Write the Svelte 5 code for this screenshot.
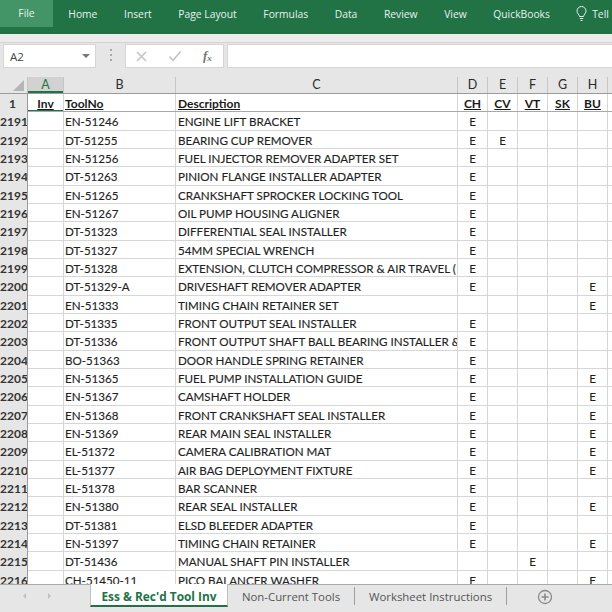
<script>
  const columns = ["A", "B", "C", "D", "E", "F", "G", "H", "I"]
  const menu = ["Home", "Insert", "Page Layout", "Formulas", "Data", "Review", "View", "QuickBooks"]

  // row, tool, description, then the E marks by column
  const rows = [
    [2191, "EN-51246", "ENGINE LIFT BRACKET", "D"],
    [2192, "DT-51255", "BEARING CUP REMOVER", "DE"],
    [2193, "EN-51256", "FUEL INJECTOR REMOVER ADAPTER SET", "D"],
    [2194, "DT-51263", "PINION FLANGE INSTALLER ADAPTER", "D"],
    [2195, "EN-51265", "CRANKSHAFT SPROCKER LOCKING TOOL", "D"],
    [2196, "EN-51267", "OIL PUMP HOUSING ALIGNER", "D"],
    [2197, "DT-51323", "DIFFERENTIAL SEAL INSTALLER", "D"],
    [2198, "DT-51327", "54MM SPECIAL WRENCH", "D"],
    [2199, "DT-51328", "EXTENSION, CLUTCH COMPRESSOR & AIR TRAVEL (", "D"],
    [2200, "DT-51329-A", "DRIVESHAFT REMOVER ADAPTER", "DH"],
    [2201, "EN-51333", "TIMING CHAIN RETAINER SET", "H"],
    [2202, "DT-51335", "FRONT OUTPUT SEAL INSTALLER", "D"],
    [2203, "DT-51336", "FRONT OUTPUT SHAFT BALL BEARING INSTALLER &", "D"],
    [2204, "BO-51363", "DOOR HANDLE SPRING RETAINER", "D"],
    [2205, "EN-51365", "FUEL PUMP INSTALLATION GUIDE", "DH"],
    [2206, "EN-51367", "CAMSHAFT HOLDER", "DH"],
    [2207, "EN-51368", "FRONT CRANKSHAFT SEAL INSTALLER", "DH"],
    [2208, "EN-51369", "REAR MAIN SEAL INSTALLER", "DH"],
    [2209, "EL-51372", "CAMERA CALIBRATION MAT", "DH"],
    [2210, "EL-51377", "AIR BAG DEPLOYMENT FIXTURE", "DH"],
    [2211, "EL-51378", "BAR SCANNER", "D"],
    [2212, "EN-51380", "REAR SEAL INSTALLER", "DH"],
    [2213, "DT-51381", "ELSD BLEEDER ADAPTER", "D"],
    [2214, "EN-51397", "TIMING CHAIN RETAINER", "DH"],
    [2215, "DT-51436", "MANUAL SHAFT PIN INSTALLER", "F"],
    [2216, "CH-51450-11", "PICO BALANCER WASHER", "DH"]
  ]
</script>

<div class="excel">
  <nav class="ribbon">
    <span class="file">File</span>
    {#each menu as item}
      <span class="menuItem">{item}</span>
    {/each}
    <span class="tell">
      <svg width="11" height="16" viewBox="0 0 11 16" fill="none" stroke="#e4efe8" stroke-width="1">
        <path d="M3.500 10.500C3.300 8.500 1 7.600 1 5a4.500 4.500 0 0 1 9 0c0 2.600-2.300 3.500-2.500 5.500z" />
        <path d="M3.800 12.500h3.400M4.500 14.500h2" />
      </svg>
      Tell
    </span>
  </nav>

  <div class="band"></div>

  <div class="formulaBar">
    <div class="nameBox">
      <span>A2</span>
      <i class="caret"></i>
    </div>
    <div class="grip"><b></b><b></b><b></b></div>
    <div class="fxButtons">
      <svg width="11" height="11" viewBox="0 0 11 11" stroke="#c4c4c4" stroke-width="1.600" fill="none">
        <path d="M1 1l9 9M10 1l-9 9" />
      </svg>
      <svg width="14" height="12" viewBox="0 0 14 12" stroke="#c4c4c4" stroke-width="1.600" fill="none">
        <path d="M1.500 6.500l3.500 4 7.500-9" />
      </svg>
      <span class="fx">f<sub>x</sub></span>
    </div>
    <div class="formulaInput"></div>
  </div>

  <div class="sheet">
    <div class="headRow">
      <div class="corner"><i></i></div>
      {#each columns as col}
        <div class="colHead" class:active={col === "A"}>{col}</div>
      {/each}
    </div>

    <div class="row titleRow">
      <div class="rowHead">1</div>
      <div class="cell center activeCell">Inv</div>
      <div class="cell toolCell">ToolNo</div>
      <div class="cell">Description</div>
      <div class="cell center">CH</div>
      <div class="cell center">CV</div>
      <div class="cell center">VT</div>
      <div class="cell center">SK</div>
      <div class="cell center">BU</div>
      <div class="cell"></div>
    </div>

    {#each rows as [num, tool, desc, marks]}
      <div class="row">
        <div class="rowHead">{num}</div>
        <div class="cell"></div>
        <div class="cell toolCell">{tool}</div>
        <div class="cell">{desc}</div>
        {#each ["D", "E", "F", "G", "H"] as col}
          <div class="cell center">{marks.includes(col) ? "E" : ""}</div>
        {/each}
        <div class="cell"></div>
      </div>
    {/each}
  </div>

  <footer class="tabs">
    <div class="arrows">
      <i class="left"></i>
      <i class="right"></i>
    </div>
    <div class="tab current">Ess &amp; Rec'd Tool Inv</div>
    <div class="tab nonCurrent">Non-Current Tools</div>
    <div class="tab worksheet">Worksheet Instructions</div>
    <svg class="addSheet" width="16" height="16" viewBox="0 0 16 16" fill="none" stroke="#8a8a8a">
      <circle cx="8" cy="8" r="6.500" stroke-width="1.300" />
      <path d="M8 4.500v7M4.500 8h7" stroke-width="1.600" />
    </svg>
  </footer>
</div>

<style>
  :global(body) {
    margin: 0;
  }

  .excel {
    width: 612px;
    height: 612px;
    overflow: hidden;
    display: flex;
    flex-direction: column;
    background: #e6e6e6;
    font-family: Lato, "Liberation Sans", sans-serif;
    color: #262626;
  }

  .ribbon {
    height: 34px;
    flex: none;
    display: flex;
    align-items: center;
    background: #217346;
    color: #e8f1ec;
    font-family: "Open Sans", sans-serif;
    font-size: 10.300px;
    white-space: nowrap;
  }

  .file {
    align-self: flex-start;
    width: 53px;
    height: 27px;
    line-height: 27px;
    margin-right: 2px;
    text-align: center;
    background: #439467;
  }

  .menuItem {
    padding: 0 13.300px;
    position: relative;
    top: -3px;
  }

  .tell {
    position: relative;
    top: -3px;
    margin-left: 13px;
    display: flex;
    align-items: center;
    gap: 5px;
  }

  .band {
    height: 9px;
    flex: none;
    background: #ececec;
    border-bottom: 1px solid #d4d4d4;
    box-sizing: border-box;
  }

  .formulaBar {
    height: 34px;
    flex: none;
    display: flex;
    padding: 0 0 0 3px;
    background: #e6e6e6;
    box-sizing: border-box;
  }

  .nameBox {
    width: 93px;
    height: 24px;
    margin-top: 1px;
    box-sizing: border-box;
    display: flex;
    align-items: center;
    justify-content: space-between;
    padding: 0 5px 0 6px;
    background: #fff;
    border: 1px solid #d6d6d6;
    font-family: "Open Sans", sans-serif;
    font-size: 11.500px;
    color: #444;
  }

  .caret {
    border: 4px solid transparent;
    border-top-color: #777;
    border-bottom: 0;
  }

  .grip {
    width: 29px;
    height: 24px;
    display: flex;
    flex-direction: column;
    align-items: center;
    justify-content: center;
    gap: 3px;
  }

  .grip b {
    width: 2px;
    height: 2px;
    background: #aaa;
  }

  .fxButtons {
    width: 99px;
    height: 24px;
    margin-top: 1px;
    box-sizing: border-box;
    background: #fff;
    border: 1px solid #d6d6d6;
    display: flex;
    align-items: center;
    gap: 21px;
    padding-left: 10px;
  }

  .fx {
    font-family: "Liberation Serif", serif;
    font-style: italic;
    font-weight: 700;
    font-size: 13px;
    color: #777;
  }

  .fx sub {
    font-size: 9px;
    vertical-align: -1px;
  }

  .formulaInput {
    flex: 1;
    height: 24px;
    margin: 1px 0 0 3px;
    box-sizing: border-box;
    background: #fff;
    border: 1px solid #d6d6d6;
    border-right: 0;
  }

  .sheet {
    flex: 1;
    min-height: 0;
    overflow: hidden;
    background: #fff;
  }

  .headRow,
  .row {
    display: grid;
    grid-template-columns: 28px 36px 112px 282px 30px 30px 30px 30px 30px 30px;
  }

  .headRow {
    height: 17px;
    background: #e6e6e6;
    border-bottom: 1px solid #9b9b9b;
    box-sizing: border-box;
  }

  .corner {
    position: relative;
    border-right: 1px solid #c6c6c6;
  }

  .corner i {
    position: absolute;
    right: 3px;
    bottom: 2px;
    border-style: solid;
    border-width: 0 0 11px 11px;
    border-color: transparent transparent #b5b5b5 transparent;
  }

  .colHead {
    border-right: 1px solid #c6c6c6;
    text-align: center;
    font-size: 12.500px;
    line-height: 16px;
    color: #2b2b2b;
  }

  .colHead.active {
    background: #d2d2d2;
    color: #217346;
    box-shadow: inset 0 -2px 0 #217346;
  }

  .row {
    height: 18.330px;
    box-sizing: border-box;
    border-bottom: 1px solid #d6d6d6;
  }

  .rowHead {
    background: #e6e6e6;
    border-right: 1px solid #9b9b9b;
    margin-bottom: -1px;
    text-align: right;
    padding-right: 2px;
    font-size: 12px;
    font-weight: 700;
    line-height: 19px;
    color: #333;
    overflow: hidden;
  }

  .cell {
    border-right: 1px solid #d6d6d6;
    padding-left: 2px;
    font-size: 11.600px;
    line-height: 19px;
    white-space: nowrap;
    overflow: hidden;
    color: #1f1f1f;
    -webkit-text-stroke: 0.15px #1f1f1f;
  }

  .toolCell {
    padding-left: 1px;
  }

  .center {
    padding-left: 0;
    text-align: center;
  }

  .titleRow {
    border-bottom-color: #a8a8a8;
  }

  .titleRow .rowHead {
    text-align: center;
  }

  .titleRow .cell {
    font-size: 12px;
    font-weight: 700;
    text-decoration: underline;
    -webkit-text-stroke: 0;
    color: #1a1a1a;
  }

  .titleRow .activeCell {
    box-shadow: inset 0 -1px 0 #217346;
  }

  .tabs {
    height: 28px;
    flex: none;
    display: flex;
    align-items: flex-start;
    background: #e6e6e6;
    border-top: 1px solid #a8a8a8;
    box-sizing: border-box;
    font-family: "Open Sans", sans-serif;
    font-size: 11.400px;
    color: #555;
  }

  .arrows {
    width: 90px;
    height: 22px;
    display: flex;
    align-items: center;
    gap: 22px;
    padding-left: 23px;
    box-sizing: border-box;
  }

  .arrows i {
    border: 3px solid transparent;
  }

  .arrows .left {
    border-right-color: #c0c0c0;
    border-left: 0;
  }

  .arrows .right {
    border-left-color: #c0c0c0;
    border-right: 0;
  }

  .tab {
    height: 18px;
    line-height: 20px;
    margin-top: 2px;
    text-align: center;
    white-space: nowrap;
    border-right: 1px solid #a0a0a0;
    box-sizing: border-box;
  }

  .tab.nonCurrent {
    width: 127px;
  }

  .tab.worksheet {
    width: 152px;
  }

  .tab.current {
    width: 138px;
    margin-top: -1px;
    height: 23px;
    line-height: 25px;
    background: #fff;
    border: 1px solid #c0c0c0;
    border-top: 0;
    border-bottom: 2px solid #217346;
    color: #217346;
    font-size: 11.900px;
    font-weight: 700;
  }

  .addSheet {
    margin: 4px 0 0 30px;
  }
</style>
